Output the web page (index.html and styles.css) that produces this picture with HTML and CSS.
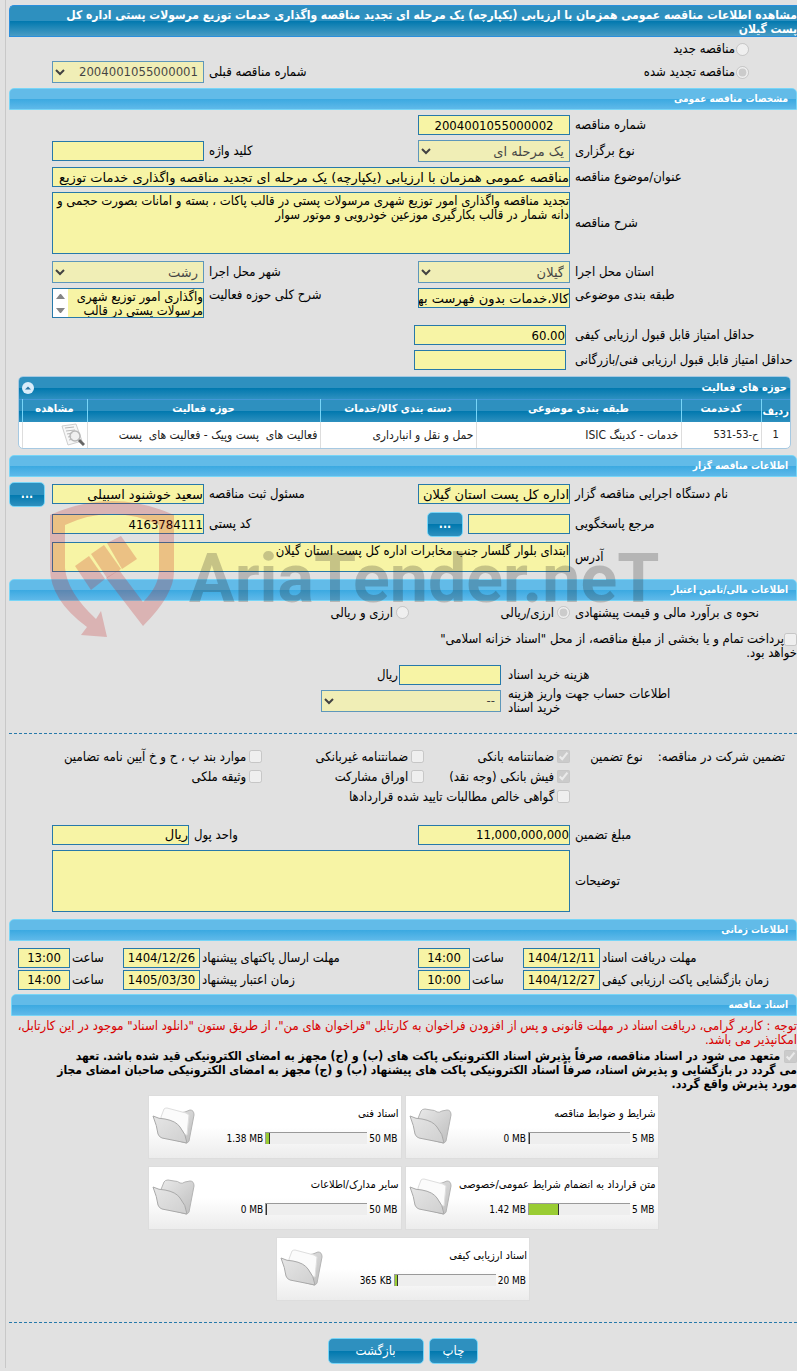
FILE: index.html
```html
<!doctype html>
<html lang="fa" dir="rtl">
<head>
	<meta charset="UTF-8">
	<title>مشاهده اطلاعات مناقصه عمومی</title>
	<link rel="stylesheet" href="styles.css">
</head>
<body>

<svg class="defs" width="0" height="0" aria-hidden="true">
	<defs>
		<linearGradient id="gBack" x1="0" y1="0" x2="1" y2="1">
			<stop offset="0" stop-color="#eaeaea"/>
			<stop offset="1" stop-color="#bdbdbd"/>
		</linearGradient>
		<linearGradient id="gFront" x1="0" y1="0" x2="1" y2="1">
			<stop offset="0" stop-color="#e6e6e6"/>
			<stop offset="1" stop-color="#cfcfcf"/>
		</linearGradient>
	</defs>
	<symbol id="folder" viewBox="0 0 44 38">
		<path d="M8 14 L12 4 Q13 2 16 2 L22 3 Q26 3 28 5 Q30 6 33 4 L38 3 Q42 3 42 8 L37 34 Q36 36 34 36 L12 30 Z" fill="url(#gBack)" stroke="#b4b4b4"/>
		<path d="M1 9 Q7 12 13 12 Q24 14 28 20 Q34 27 35 36 L10 31 Q7 30 6 27 Q5 19 1 9 Z" fill="url(#gFront)" stroke="#a9a9a9"/>
	</symbol>
	<symbol id="folder-full" viewBox="0 0 44 38">
		<path d="M10 12 L14 4 L28 6 L33 5 L38 3 Q42 3 42 8 L37 34 Q36 36 34 36 L12 30 Z" fill="url(#gBack)" stroke="#b4b4b4"/>
		<path d="M9 10 L12 2 Q13 1 15 1 L34 6 L37 8 L35 28 L12 26 Z" fill="#fbfbfb" stroke="#dedede"/>
		<path d="M1 9 Q7 12 13 12 Q24 14 28 20 Q34 27 35 36 L10 31 Q7 30 6 27 Q5 19 1 9 Z" fill="url(#gFront)" stroke="#a9a9a9"/>
	</symbol>
</svg>

<div id="page">

	<h1 class="title">مشاهده اطلاعات مناقصه عمومی همزمان با ارزیابی (یکپارچه) یک مرحله ای تجدید مناقصه واگذاری خدمات توزیع مرسولات پستی اداره کل<br>پست گیلان</h1>

	<div class="kind">
		<input type="radio" name="kind" id="kindNew" disabled><label for="kindNew">مناقصه جدید</label>
	</div>
	<div class="row">
		<div class="kind">
			<input type="radio" name="kind" id="kindRenew" checked disabled><label for="kindRenew">مناقصه تجدید شده</label>
		</div>
		<label class="lbl third" for="prevNo">شماره مناقصه قبلی</label>
		<select id="prevNo" disabled><option>2004001055000001</option></select>
	</div>

	<h2>مشخصات مناقصه عمومی</h2>

	<div class="row mt5">
		<label class="lbl" for="tenderNo">شماره مناقصه</label>
		<input type="text" class="center" id="tenderNo" value="2004001055000002" readonly>
	</div>
	<div class="row mt5">
		<label class="lbl" for="holdType">نوع برگزاری</label>
		<select class="fa" id="holdType" disabled><option>یک مرحله ای</option></select>
		<label class="lbl" for="keyword">کلید واژه</label>
		<input type="text" id="keyword" readonly>
	</div>
	<div class="row mt5">
		<label class="lbl" for="subject">عنوان/موضوع مناقصه</label>
		<input type="text" class="wide fa" id="subject" value="مناقصه عمومی همزمان با ارزیابی (یکپارچه) یک مرحله ای تجدید مناقصه واگذاری خدمات توزیع" readonly>
	</div>
	<div class="row mt5">
		<label class="lbl" for="desc">شرح مناقصه</label>
		<textarea class="wide tall" id="desc" readonly>تجدید مناقصه واگذاری امور توزیع شهری مرسولات پستی در قالب پاکات ، بسته و امانات بصورت حجمی و دانه شمار در قالب بکارگیری موزعین خودرویی و موتور سوار</textarea>
	</div>
	<div class="row mt7">
		<label class="lbl" for="province">استان محل اجرا</label>
		<select class="fa" id="province" disabled><option>گیلان</option></select>
		<label class="lbl" for="city">شهر محل اجرا</label>
		<select class="fa" id="city" disabled><option>رشت</option></select>
	</div>
	<div class="row top mt5">
		<label class="lbl" for="category">طبقه بندی موضوعی</label>
		<input type="text" class="fa" id="category" value="کالا،خدمات بدون فهرست بها" readonly>
		<label class="lbl" for="scope">شرح کلی حوزه فعالیت</label>
		<div class="scroll">
			<textarea id="scope" readonly>واگذاری امور توزیع شهری مرسولات پستی در قالب</textarea>
			<svg width="15" height="28" viewBox="0 0 15 28"><path d="M3 10 H12 L8 5 H7 Z M3 19 H12 L8 24 H7 Z" fill="#858585"/></svg>
		</div>
	</div>
	<div class="row score mt7">
		<label class="lbl" for="minQuality">حداقل امتیاز قابل قبول ارزیابی کیفی</label>
		<input type="text" id="minQuality" value="60.00" readonly>
	</div>
	<div class="row score mt5">
		<label class="lbl" for="minTech">حداقل امتیاز قابل قبول ارزیابی فنی/بازرگانی</label>
		<input type="text" id="minTech" readonly>
	</div>

	<div class="panel">
		<div class="panel-head">
			<span>حوزه های فعالیت</span>
			<button type="button" class="collapse" aria-label="بستن">
				<svg width="12" height="12" viewBox="0 0 12 12"><circle cx="6" cy="6" r="6" fill="#d9ecfa"/><path d="M3 7.500 L6 4.500 L9 7.500 Z" fill="#2a76a5"/></svg>
			</button>
		</div>
		<table>
			<colgroup>
				<col class="c-row"><col class="c-code"><col class="c-cat"><col class="c-goods"><col class="c-scope"><col class="c-view"><col class="c-edge">
			</colgroup>
			<thead>
				<tr><th class="low">ردیف</th><th>کدخدمت</th><th>طبقه بندی موضوعی</th><th>دسته بندی کالا/خدمات</th><th>حوزه فعالیت</th><th>مشاهده</th><th></th></tr>
			</thead>
			<tbody>
				<tr>
					<td class="num mid">1</td>
					<td class="num">ح-53-531</td>
					<td>خدمات - کدینگ ISIC</td>
					<td>حمل و نقل و انبارداری</td>
					<td>فعالیت های&nbsp; پست وپیک - فعالیت های&nbsp; پست</td>
					<td>
						<a href="#" aria-label="مشاهده">
							<svg class="view" width="24" height="24" viewBox="0 0 24 24">
								<path d="M1 3 L15 1 L21 18 L7 22 Z" fill="#f7f7f7" stroke="#cfcfcf"/>
								<path d="M4 5 L13 4 M5 8 L14 7 M6 11 L12 10 M7 14 L11 13 M8 17 L12 16" stroke="#b9b9b9" fill="none"/>
								<circle cx="14" cy="13" r="5" fill="#eee" fill-opacity=".8" stroke="#b8b8b8" stroke-width="1.500"/>
								<path d="M18 17 L23 22" stroke="#666" stroke-width="3"/>
							</svg>
						</a>
					</td>
					<td></td>
				</tr>
			</tbody>
		</table>
	</div>

	<h2>اطلاعات مناقصه گزار</h2>

	<div class="row with-btn mt5">
		<label class="lbl" for="org">نام دستگاه اجرایی مناقصه گزار</label>
		<input type="text" class="fa" id="org" value="اداره کل پست استان گیلان" readonly>
		<label class="lbl" for="owner">مسئول ثبت مناقصه</label>
		<input type="text" class="fa" id="owner" value="سعید خوشنود اسبیلی" readonly>
		<button type="button" class="btn dots">...</button>
	</div>
	<div class="row mt5">
		<label class="lbl" for="contact">مرجع پاسخگویی</label>
		<div class="pick">
			<input type="text" id="contact" readonly>
			<button type="button" class="btn dots">...</button>
		</div>
		<label class="lbl" for="zip">کد پستی</label>
		<input type="text" id="zip" value="4163784111" readonly>
	</div>
	<div class="row mt5">
		<label class="lbl" for="address">آدرس</label>
		<textarea class="wide address" id="address" readonly>ابتدای بلوار گلسار جنب مخابرات اداره کل پست استان گیلان</textarea>
	</div>

	<h2 class="mt7">اطلاعات مالی/تامین اعتبار</h2>

	<div class="row checks">
		<span class="lbl">نحوه ی برآورد مالی و قیمت پیشنهادی</span>
		<span class="opt"><input type="radio" name="cur" id="cur1" checked disabled><label for="cur1">ارزی/ریالی</label></span>
		<span class="opt"><input type="radio" name="cur" id="cur2" disabled><label for="cur2">ارزی و ریالی</label></span>
	</div>
	<p class="treasury">
		<input type="checkbox" id="treasury" disabled><label for="treasury">پرداخت تمام و یا بخشی از مبلغ مناقصه، از محل "اسناد خزانه اسلامی"<br>خواهد بود.</label>
	</p>
	<div class="row cost mt5">
		<label class="lbl" for="cost">هزینه خرید اسناد</label>
		<div class="pick"><input type="text" id="cost" readonly><span>ریال</span></div>
	</div>
	<div class="row cost mt2">
		<label class="lbl" for="account">اطلاعات حساب جهت واریز هزینه<br>خرید اسناد</label>
		<select id="account" disabled><option>--</option></select>
	</div>

	<hr class="mt18">

	<div class="bail">
		<span class="bail-of">تضمین شرکت در مناقصه:</span>
		<span>نوع تضمین</span>
		<div class="bail-opts">
			<span class="opt"><input type="checkbox" id="b1" checked disabled><label for="b1">ضمانتنامه بانکی</label></span>
			<span class="opt"><input type="checkbox" id="b2" disabled><label for="b2">ضمانتنامه غیربانکی</label></span>
			<span class="opt"><input type="checkbox" id="b3" disabled><label for="b3">موارد بند پ ، ح و خ آیین نامه تضامین</label></span>
			<span class="opt"><input type="checkbox" id="b4" checked disabled><label for="b4">فیش بانکی (وجه نقد)</label></span>
			<span class="opt"><input type="checkbox" id="b5" disabled><label for="b5">اوراق مشارکت</label></span>
			<span class="opt"><input type="checkbox" id="b6" disabled><label for="b6">وثیقه ملکی</label></span>
			<span class="opt all"><input type="checkbox" id="b7" disabled><label for="b7">گواهی خالص مطالبات تایید شده قراردادها</label></span>
		</div>
	</div>

	<div class="row unit mt18">
		<label class="lbl" for="amount">مبلغ تضمین</label>
		<input type="text" id="amount" value="11,000,000,000" readonly>
		<label class="lbl" for="unit">واحد پول</label>
		<input type="text" class="fa" id="unit" value="ریال" readonly>
	</div>
	<div class="row mt5">
		<label class="lbl" for="notes">توضیحات</label>
		<textarea class="wide tall" id="notes" readonly></textarea>
	</div>

	<h2 class="mt7">اطلاعات زمانی</h2>

	<div class="times">
		<label class="lbl" for="d1">مهلت دریافت اسناد</label>
		<input type="text" class="center" id="d1" value="1404/12/11" readonly>
		<label class="lbl" for="t1">ساعت</label>
		<input type="text" class="center" id="t1" value="14:00" readonly>
		<label class="lbl" for="d2">مهلت ارسال پاکتهای پیشنهاد</label>
		<input type="text" class="center" id="d2" value="1404/12/26" readonly>
		<label class="lbl" for="t2">ساعت</label>
		<input type="text" class="center" id="t2" value="13:00" readonly>

		<label class="lbl" for="d3">زمان بازگشایی پاکت ارزیابی کیفی</label>
		<input type="text" class="center" id="d3" value="1404/12/27" readonly>
		<label class="lbl" for="t3">ساعت</label>
		<input type="text" class="center" id="t3" value="10:00" readonly>
		<label class="lbl" for="d4">زمان اعتبار پیشنهاد</label>
		<input type="text" class="center" id="d4" value="1405/03/30" readonly>
		<label class="lbl" for="t4">ساعت</label>
		<input type="text" class="center" id="t4" value="14:00" readonly>
	</div>

	<h2 class="docs-head">اسناد مناقصه</h2>

	<p class="warn">توجه : کاربر گرامی، دریافت اسناد در مهلت قانونی و پس از افزودن فراخوان به کارتابل "فراخوان های من"، از طریق ستون "دانلود اسناد" موجود در این کارتابل،<br>امکانپذیر می باشد.</p>
	<p class="commit">
		<input type="checkbox" id="commit" checked disabled><label for="commit"> متعهد می شود در اسناد مناقصه، صرفاً پذیرش اسناد الکترونیکی پاکت های (ب) و (ج) مجهز به امضای الکترونیکی قید شده باشد. تعهد<br>می گردد در بازگشایی و پذیرش اسناد، صرفاً اسناد الکترونیکی پاکت های پیشنهاد (ب) و (ج) مجهز به امضای الکترونیکی صاحبان امضای مجاز<br>مورد پذیرش واقع گردد.</label>
	</p>

	<div class="docs">
		<div class="doc">
			<div class="doc-info">
				<span>شرایط و ضوابط مناقصه</span>
				<div class="usage"><span>0 MB</span><div class="bar"><div class="fill" style="width:1%"></div></div><span>5 MB</span></div>
			</div>
			<svg class="folder"><use href="#folder"/></svg>
		</div>
		<div class="doc">
			<div class="doc-info">
				<span>اسناد فنی</span>
				<div class="usage"><span>1.38 MB</span><div class="bar"><div class="fill" style="width:4%"></div></div><span>50 MB</span></div>
			</div>
			<svg class="folder"><use href="#folder-full"/></svg>
		</div>
		<div class="doc">
			<div class="doc-info">
				<span>متن قرارداد به انضمام شرایط عمومی/خصوصی</span>
				<div class="usage"><span>1.42 MB</span><div class="bar"><div class="fill" style="width:30%"></div></div><span>5 MB</span></div>
			</div>
			<svg class="folder"><use href="#folder-full"/></svg>
		</div>
		<div class="doc">
			<div class="doc-info">
				<span>سایر مدارک/اطلاعات</span>
				<div class="usage"><span>0 MB</span><div class="bar"><div class="fill" style="width:1%"></div></div><span>50 MB</span></div>
			</div>
			<svg class="folder"><use href="#folder"/></svg>
		</div>
		<div class="doc">
			<div class="doc-info">
				<span>اسناد ارزیابی کیفی</span>
				<div class="usage"><span>365 KB</span><div class="bar"><div class="fill" style="width:3%"></div></div><span>20 MB</span></div>
			</div>
			<svg class="folder"><use href="#folder-full"/></svg>
		</div>
	</div>

	<hr>

	<div class="actions">
		<button type="button" class="btn">چاپ</button>
		<button type="button" class="btn back">بازگشت</button>
	</div>

	<!-- watermark -->
	<svg class="watermark" viewBox="0 0 640 160" direction="ltr" aria-hidden="true">
		<g fill="#c11a1a" fill-opacity=".23">
			<path fill-rule="evenodd" d="M16 25 Q78 -3 140 25 V82 Q140 105 109 136 L72 88 L85 80 L109 112 Q125 96 125 80 V35 Q78 13 31 35 V78 Q33 102 62 129 L67 121 L73 147 L47 145 L53 137 Q16 110 16 78 Z"/>
			<path d="M41 76 L55 66 L71 89 L57 100 Z"/>
			<path d="M57 64 L70 55 L87 79 L73 88 Z"/>
			<path d="M73 53 L87 46 L103 69 L88 79 Z"/>
		</g>
		<text x="155" y="112">AriaTender.neT</text>
	</svg>

</div>

</body>
</html>
```

FILE: styles.css
```css
* {
	box-sizing: border-box;
}

body {
	margin: 0px;
	background: #e1e1e1;
	color: #000;
	font-family: "DejaVu Sans Condensed", "DejaVu Sans", sans-serif;
	font-size: 13px;
	line-height: 14px;
}

h1,h2,p {
	margin: 0px;
}

.defs {
	position: absolute;
}

#page {
	position: relative;
	margin-left: 5px;
	padding: 5px 0px 4px 3px;
	border-left: 1px solid #c8c8c8;
}

/*headers*/
.title {
	height: 32px;
	padding-top: 2px;
	border: 1px solid #2b8fdc;
	border-right: none;
	border-radius: 5px 0px 0px 0px;
	background: linear-gradient(#2e90bf 50%, #0078ae 50%, #4a9cc4);
	color: #fff;
	font-size: 12px;
	line-height: 14px;
	white-space: nowrap;
}

h2 {
	height: 22px;
	margin-top: 5px;
	padding-right: 8px;
	border: 1px solid #77d5f7;
	border-radius: 5px 5px 0px 0px;
	background: linear-gradient(#62bbe8 50%, #3ba9e1 50%, #5fb9e9);
	color: #fff;
	font-size: 10px;
	line-height: 20px;
}

.mt2 {
	margin-top: 2px;
}

.mt5 {
	margin-top: 5px;
}

.mt7 {
	margin-top: 7px;
}

/*form rows*/
.row {
	display: grid;
	grid-template-columns: 227px 152px 1fr 152px;
	align-items: center;
	padding-left: 43px;
	min-height: 20px;
}

.row.top {
	align-items: start;
}

.lbl {
	padding-left: 5px;
	text-align: left;
}

.third {
	grid-column: 3;
}

.wide {
	grid-column: 2 / 5;
}

.kind {
	display: flex;
	align-items: center;
	gap: 1px;
	height: 22px;
	margin-top: 1px;
	padding-right: 48px;
}

input[type=text],textarea,select {
	width: 100%;
	margin: 0px;
	border: 1px solid #2779aa;
	border-radius: 0px;
	background-color: #f7f4a5;
	color: #000;
	font-family: inherit;
	font-size: 13px;
}

input[type=text] {
	height: 20px;
	padding: 0px;
}

input.fa,select.fa {
	font-family: "DejaVu Sans", sans-serif;
}

input.center {
	text-align: center;
}

input[type=radio],input[type=checkbox] {
	flex: none;
	width: 13px;
	height: 13px;
	margin: 0px;
}

select {
	height: 22px;
	padding: 0px 1px;
}

textarea {
	display: block;
	height: 30px;
	padding: 1px 0px;
	line-height: 14px;
	resize: none;
	overflow: hidden;
}

textarea.tall {
	height: 62px;
}

.scroll {
	display: flex;
	height: 30px;
	border: 1px solid #2779aa;
	background: #fff;
}

.scroll textarea {
	flex: 1;
	height: 28px;
	border: none;
}

.scroll svg {
	flex: none;
}

.score {
	grid-template-columns: 231px 152px 1fr;
}

.score .lbl {
	padding-left: 9px;
}

.with-btn {
	grid-template-columns: 227px 152px 1fr 152px 43px;
	padding-left: 0px;
}

.with-btn .dots {
	margin-right: 7px;
}

.pick {
	display: flex;
	align-items: center;
	gap: 5px;
}

.pick input[type=text] {
	width: 102px;
}

/*buttons*/
.btn {
	height: 26px;
	padding: 0px 13px;
	border: 1px solid #77d5f7;
	border-radius: 5px;
	background: linear-gradient(#2e90bf 50%, #0078ae 50%, #2e90bf);
	color: #fff;
	font-family: inherit;
	font-size: 13px;
	cursor: pointer;
}

.dots {
	width: 36px;
	height: 25px;
	padding: 0px;
	font-size: 12px;
	font-weight: bold;
}

/*activity table*/
.panel {
	margin: 6px 6px 0px 9px;
	border: 1px solid #a6c9e2;
	border-radius: 5px;
	background: #fff;
	overflow: hidden;
}

.panel-head {
	display: flex;
	justify-content: space-between;
	align-items: center;
	height: 22px;
	padding: 0px 3px;
	background: linear-gradient(#2e90bf 50%, #0078ae 50%, #2e90bf);
	color: #fff;
	font-size: 11px;
	font-weight: bold;
}

.collapse {
	height: 12px;
	padding: 0px;
	border: none;
	background: none;
	cursor: pointer;
}

.collapse svg {
	display: block;
}

table {
	width: 100%;
	border-collapse: collapse;
	table-layout: fixed;
}

.c-row { width: 29px; }
.c-code { width: 80px; }
.c-cat { width: 205px; }
.c-goods { width: 156px; }
.c-view { width: 65px; }
.c-edge { width: 3px; }

thead tr {
	background: linear-gradient(#2e90bf 50%, #0078ae 50%, #2e90bf);
}

th {
	height: 22px;
	padding: 0px 0px 4px;
	border-top: 1px solid #4297d7;
	border-left: 1px solid #77d5f7;
	color: #fff;
	font-size: 11px;
	white-space: nowrap;
}

th.low {
	padding: 3px 0px 0px;
}

td {
	height: 26px;
	padding: 0px 2px;
	border-left: 1px solid #ddd;
	color: #222;
	font-size: 12px;
	white-space: nowrap;
}

td.num {
	font-size: 11px;
}

td.mid {
	text-align: center;
}

th:last-child,td:last-child {
	padding: 0px;
	border-left: none;
}

.view {
	display: block;
}

.panel + h2 {
	margin-top: 6px;
}

/*options*/
.checks {
	grid-template-columns: 227px 161px 1fr;
	height: 24px;
}

.opt {
	display: flex;
	align-items: center;
	gap: 3px;
	white-space: nowrap;
}

.treasury {
	margin-top: 7px;
}

.treasury input[type=checkbox],.commit input[type=checkbox] {
	vertical-align: middle;
}

.cost {
	grid-template-columns: 296px 180px 1fr;
}

.cost .lbl {
	padding-left: 7px;
}

.cost .pick {
	gap: 1px;
}

hr {
	margin: 21px 0px 0px;
	border: none;
	border-top: 1px dashed #2779aa;
}

.mt18 {
	margin-top: 18px;
}

.bail {
	display: flex;
	gap: 15px;
	margin-top: 13px;
	padding-right: 12px;
	line-height: 20px;
}

.bail-opts {
	display: grid;
	grid-template-columns: 146px 162px 1fr;
	flex: 1;
	margin-right: 5px;
}

.bail-opts .all {
	grid-column: 1 / 4;
}

.unit {
	grid-template-columns: 227px 152px 1fr 137px;
}

/*dates*/
.times {
	display: grid;
	grid-template-columns: 197px 77px 53px 52px 1fr 77px 53px 52px;
	align-items: center;
	row-gap: 2px;
	margin-top: 7px;
	padding-left: 9px;
}

.times .lbl {
	padding-left: 2px;
	white-space: nowrap;
}

.docs-head {
	margin: 4px 0px 0px 2px;
}

.warn {
	margin-top: 3px;
	color: #d90000;
	white-space: nowrap;
}

.commit {
	margin-top: 2px;
	font-size: 12px;
	font-weight: bold;
	white-space: nowrap;
}

/*documents*/
.docs {
	display: flex;
	flex-wrap: wrap;
	justify-content: center;
	gap: 7px 3px;
	max-width: 560px;
	margin: 4px auto 0px;
}

.doc {
	display: flex;
	justify-content: space-between;
	width: 254px;
	height: 64px;
	padding: 11px 2px 0px 3px;
	border: 1px solid #ddd;
	background: linear-gradient(#fff 50%, #ececec);
	font-size: 11px;
}

.doc-info {
	display: flex;
	flex-direction: column;
	gap: 11px;
	white-space: nowrap;
}

.usage {
	display: flex;
	direction: ltr;
	justify-content: flex-end;
	gap: 2px;
	padding-right: 1px;
	font-size: 10px;
}

.bar {
	width: 102px;
	height: 12px;
	border-top: 1px solid #999;
	border-left: 1px solid #999;
	background: #eee;
}

.fill {
	height: 11px;
	border-right: 1px solid #333;
	background: #9c3;
}

.folder {
	flex: none;
	width: 44px;
	height: 38px;
}

.actions {
	display: flex;
	justify-content: center;
	gap: 5px;
	margin-top: 15px;
}

.actions .back {
	width: 96px;
}

/*watermark over the form*/
.watermark {
	position: absolute;
	top: 490px;
	left: 28px;
	width: 640px;
	height: 160px;
	pointer-events: none;
}

.watermark text {
	fill: #222;
	fill-opacity: .23;
	font-family: Roboto, sans-serif;
	font-size: 68px;
	font-weight: bold;
}
```
